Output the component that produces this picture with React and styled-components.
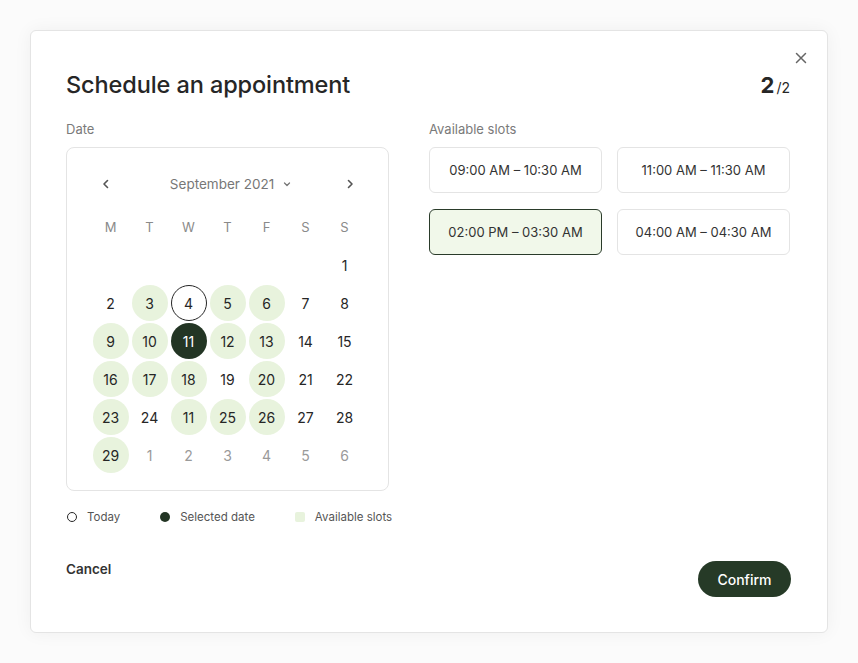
import React from 'react';
import styled, { createGlobalStyle } from 'styled-components';

const GlobalStyle = createGlobalStyle`
  body {
    margin: 0;
    background: #fbfbfb;
    font-family: Inter, "Noto Sans", sans-serif;
    color: #222;
  }
`;

const Page = styled.div`
  padding: 30px;
  min-height: 603px;
`;

const Card = styled.div`
  position: relative;
  box-sizing: border-box;
  width: 798px;
  height: 603px;
  background: #fff;
  border: 1px solid #e4e4e4;
  border-radius: 6px;
  box-shadow: 0 0 18px rgba(0, 0, 0, 0.05);
  padding: 40px 37px 35px 35px;
  display: flex;
  flex-direction: column;
`;

const Close = styled.button`
  position: absolute;
  top: 19px;
  right: 18px;
  width: 16px;
  height: 16px;
  padding: 0;
  border: 0;
  background: none;
  display: flex;
  align-items: center;
  justify-content: center;
`;

const Header = styled.div`
  display: flex;
  justify-content: space-between;
  align-items: baseline;
  height: 28px;
`;

const Title = styled.h1`
  margin: 0;
  font-size: 23.5px;
  line-height: 28px;
  font-weight: 500;
  color: #262626;
  letter-spacing: -0.1px;
`;

const Step = styled.div`
  font-size: 22px;
  font-weight: 700;
  color: #262626;
  span {
    font-size: 14px;
    font-weight: 400;
    margin-left: 2px;
  }
`;

const Columns = styled.div`
  display: grid;
  grid-template-columns: 323px 361px;
  column-gap: 40px;
  margin-top: 22px;
`;

const Label = styled.div`
  font-size: 13px;
  line-height: 16px;
  color: #7a7a7a;
  margin-bottom: 10px;
`;

const CalendarBox = styled.div`
  border: 1px solid #e4e4e4;
  border-radius: 8px;
  padding: 24px 24px 16px 24px;
`;

const MonthBar = styled.div`
  display: flex;
  align-items: center;
  justify-content: space-between;
  height: 24px;
  padding: 0 8px 0 9px;
  margin-bottom: 12px;
`;

const MonthLabel = styled.div`
  display: flex;
  align-items: center;
  gap: 8px;
  font-size: 13.5px;
  color: #777;
  padding-left: 6px;
`;

const DayGrid = styled.div`
  display: grid;
  grid-template-columns: repeat(7, 39px);
  grid-auto-rows: 38px;
`;

const Weekday = styled.div`
  display: flex;
  align-items: center;
  justify-content: center;
  font-size: 13px;
  color: #8a8a8a;
`;

const Cell = styled.div`
  display: flex;
  align-items: center;
  justify-content: center;
`;

const dayBg = { available: '#e8f3dd', selected: '#233524', today: '#fff' };
const dayColor = { selected: '#fff', muted: '#9a9a9a' };

const Day = styled.div`
  box-sizing: border-box;
  width: 36px;
  height: 36px;
  border-radius: 50%;
  display: flex;
  align-items: center;
  justify-content: center;
  font-size: 14px;
  background: ${p => dayBg[p.$kind] || 'transparent'};
  color: ${p => dayColor[p.$kind] || '#262626'};
  border: ${p => (p.$kind === 'today' ? '1px solid #262626' : 'none')};
`;

const Legend = styled.div`
  display: flex;
  gap: 40px;
  margin-top: 18px;
  padding-left: 1px;
  height: 16px;
  align-items: center;
  white-space: nowrap;
`;

const LegendItem = styled.div`
  display: flex;
  align-items: center;
  gap: 10px;
  font-size: 11.5px;
  color: #555;
  flex-shrink: 0;
`;

const Swatch = styled.span`
  box-sizing: border-box;
  width: 10px;
  height: 10px;
  border-radius: ${p => (p.$kind === 'available' ? '2px' : '50%')};
  background: ${p =>
    p.$kind === 'selected' ? '#233524' : p.$kind === 'available' ? '#e8f3dd' : '#fff'};
  border: ${p => (p.$kind === 'today' ? '1px solid #262626' : 'none')};
`;

const SlotGrid = styled.div`
  display: grid;
  grid-template-columns: 173px 173px;
  grid-auto-rows: 46px;
  column-gap: 15px;
  row-gap: 16px;
`;

const Slot = styled.button`
  box-sizing: border-box;
  border-radius: 6px;
  border: 1px solid ${p => (p.$active ? '#2a3b2a' : '#e4e4e4')};
  background: ${p => (p.$active ? '#f1f8ea' : '#fff')};
  font-family: inherit;
  font-size: 13px;
  color: #333;
  cursor: pointer;
`;

const Footer = styled.div`
  margin-top: auto;
  display: flex;
  justify-content: space-between;
  align-items: flex-start;
`;

const Cancel = styled.button`
  border: 0;
  background: none;
  padding: 0;
  font-family: inherit;
  font-size: 13.5px;
  line-height: 16px;
  font-weight: 600;
  color: #333;
`;

const Confirm = styled.button`
  width: 93px;
  height: 36px;
  border-radius: 18px;
  border: 0;
  background: #263a27;
  color: #fff;
  font-family: inherit;
  font-size: 14px;
  font-weight: 500;
  margin-right: -1px;
`;

const Chevron = ({ dir }) => (
  <svg width="12" height="12" viewBox="0 0 12 12" fill="none" stroke="#555" strokeWidth="1.6" strokeLinecap="round" strokeLinejoin="round">
    {dir === 'left' ? <path d="M7.5 2.5 4 6l3.5 3.5" /> : <path d="M4.5 2.5 8 6l-3.5 3.5" />}
  </svg>
);

const weekdays = ['M', 'T', 'W', 'T', 'F', 'S', 'S'];

const a = 'available';
const days = [
  ...Array(6).fill(null),
  [1],
  [2], [3, a], [4, 'today'], [5, a], [6, a], [7], [8],
  [9, a], [10, a], [11, 'selected'], [12, a], [13, a], [14], [15],
  [16, a], [17, a], [18, a], [19], [20, a], [21], [22],
  [23, a], [24], [11, a], [25, a], [26, a], [27], [28],
  [29, a], [1, 'muted'], [2, 'muted'], [3, 'muted'], [4, 'muted'], [5, 'muted'], [6, 'muted'],
];

const slots = [
  ['09:00 AM – 10:30 AM'],
  ['11:00 AM – 11:30 AM'],
  ['02:00 PM – 03:30 AM', true],
  ['04:00 AM – 04:30 AM'],
];

export default function App() {
  return (
    <>
      <GlobalStyle />
      <Page>
        <Card>
          <Close aria-label="Close">
            <svg width="12" height="12" viewBox="0 0 12 12" stroke="#666" strokeWidth="1.5" strokeLinecap="round">
              <path d="M1.5 1.5l9 9M10.5 1.5l-9 9" />
            </svg>
          </Close>
          <Header>
            <Title>Schedule an appointment</Title>
            <Step>2<span>/2</span></Step>
          </Header>
          <Columns>
            <div>
              <Label>Date</Label>
              <CalendarBox>
                <MonthBar>
                  <Chevron dir="left" />
                  <MonthLabel>
                    September 2021
                    <svg width="10" height="10" viewBox="0 0 10 10" fill="none" stroke="#777" strokeWidth="1.3" strokeLinecap="round" strokeLinejoin="round">
                      <path d="M2.5 4 5 6.5 7.5 4" />
                    </svg>
                  </MonthLabel>
                  <Chevron dir="right" />
                </MonthBar>
                <DayGrid>
                  {weekdays.map((w, i) => (
                    <Weekday key={'w' + i}>{w}</Weekday>
                  ))}
                  {days.map((d, i) => (
                    <Cell key={i}>{d && <Day $kind={d[1]}>{d[0]}</Day>}</Cell>
                  ))}
                </DayGrid>
              </CalendarBox>
              <Legend>
                <LegendItem><Swatch $kind="today" />Today</LegendItem>
                <LegendItem><Swatch $kind="selected" />Selected date</LegendItem>
                <LegendItem><Swatch $kind="available" />Available slots</LegendItem>
              </Legend>
            </div>
            <div>
              <Label>Available slots</Label>
              <SlotGrid>
                {slots.map(([t, active]) => (
                  <Slot key={t} $active={active}>{t}</Slot>
                ))}
              </SlotGrid>
            </div>
          </Columns>
          <Footer>
            <Cancel>Cancel</Cancel>
            <Confirm>Confirm</Confirm>
          </Footer>
        </Card>
      </Page>
    </>
  );
}
